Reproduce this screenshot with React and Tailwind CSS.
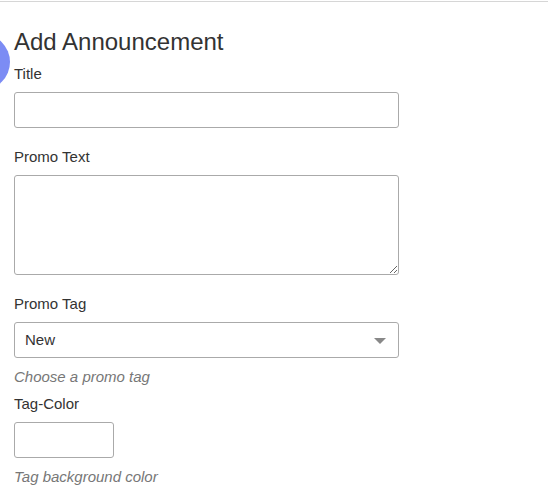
export default function App() {
  return (
    <div className="relative w-[548px] h-[494px] overflow-hidden bg-white font-['Liberation_Sans',Arial,sans-serif] text-[#333]">
      <div className="mt-px h-px bg-[#d6d6d6]" />

      {/* side bubble */}
      <div className="absolute left-[-46px] top-[34px] w-[56px] h-[56px] rounded-full bg-[#7c8cf4]" />

      <div className="pl-[14px] w-[399px]">
        <h3 className="mt-[27px] text-[24px] leading-[26px]">Add Announcement</h3>

        <label className="block mt-[9px] text-[15px] leading-[20px]">Title</label>
        <input
          type="text"
          className="block mt-[8px] w-full h-[36px] border border-[#aaa] rounded-[3px] px-[10px] text-[15px] outline-none"
        />

        <label className="block mt-[19px] text-[15px] leading-[20px]">Promo Text</label>
        <textarea className="block mt-[8px] w-full h-[100px] border border-[#aaa] rounded-[3px] px-[10px] py-[6px] text-[15px] outline-none" />

        <label className="block mt-[19px] text-[15px] leading-[20px]">Promo Tag</label>
        <div className="relative mt-[8px] w-full h-[36px] border border-[#aaa] rounded-[3px] flex items-center pl-[10px] text-[15px]">
          <span>New</span>
          <span className="absolute right-[12px] top-[15px] w-0 h-0 border-l-[6px] border-r-[6px] border-t-[6px] border-l-transparent border-r-transparent border-t-[#888]" />
        </div>
        <p className="mt-[9px] text-[15px] leading-[20px] italic text-[#777]">Choose a promo tag</p>

        <label className="block mt-[7px] text-[15px] leading-[20px]">Tag-Color</label>
        <input
          type="text"
          className="block mt-[8px] w-[100px] h-[36px] border border-[#aaa] rounded-[3px] px-[8px] text-[15px] outline-none"
        />
        <p className="mt-[9px] text-[15px] leading-[20px] italic text-[#777]">Tag background color</p>
      </div>
    </div>
  )
}
